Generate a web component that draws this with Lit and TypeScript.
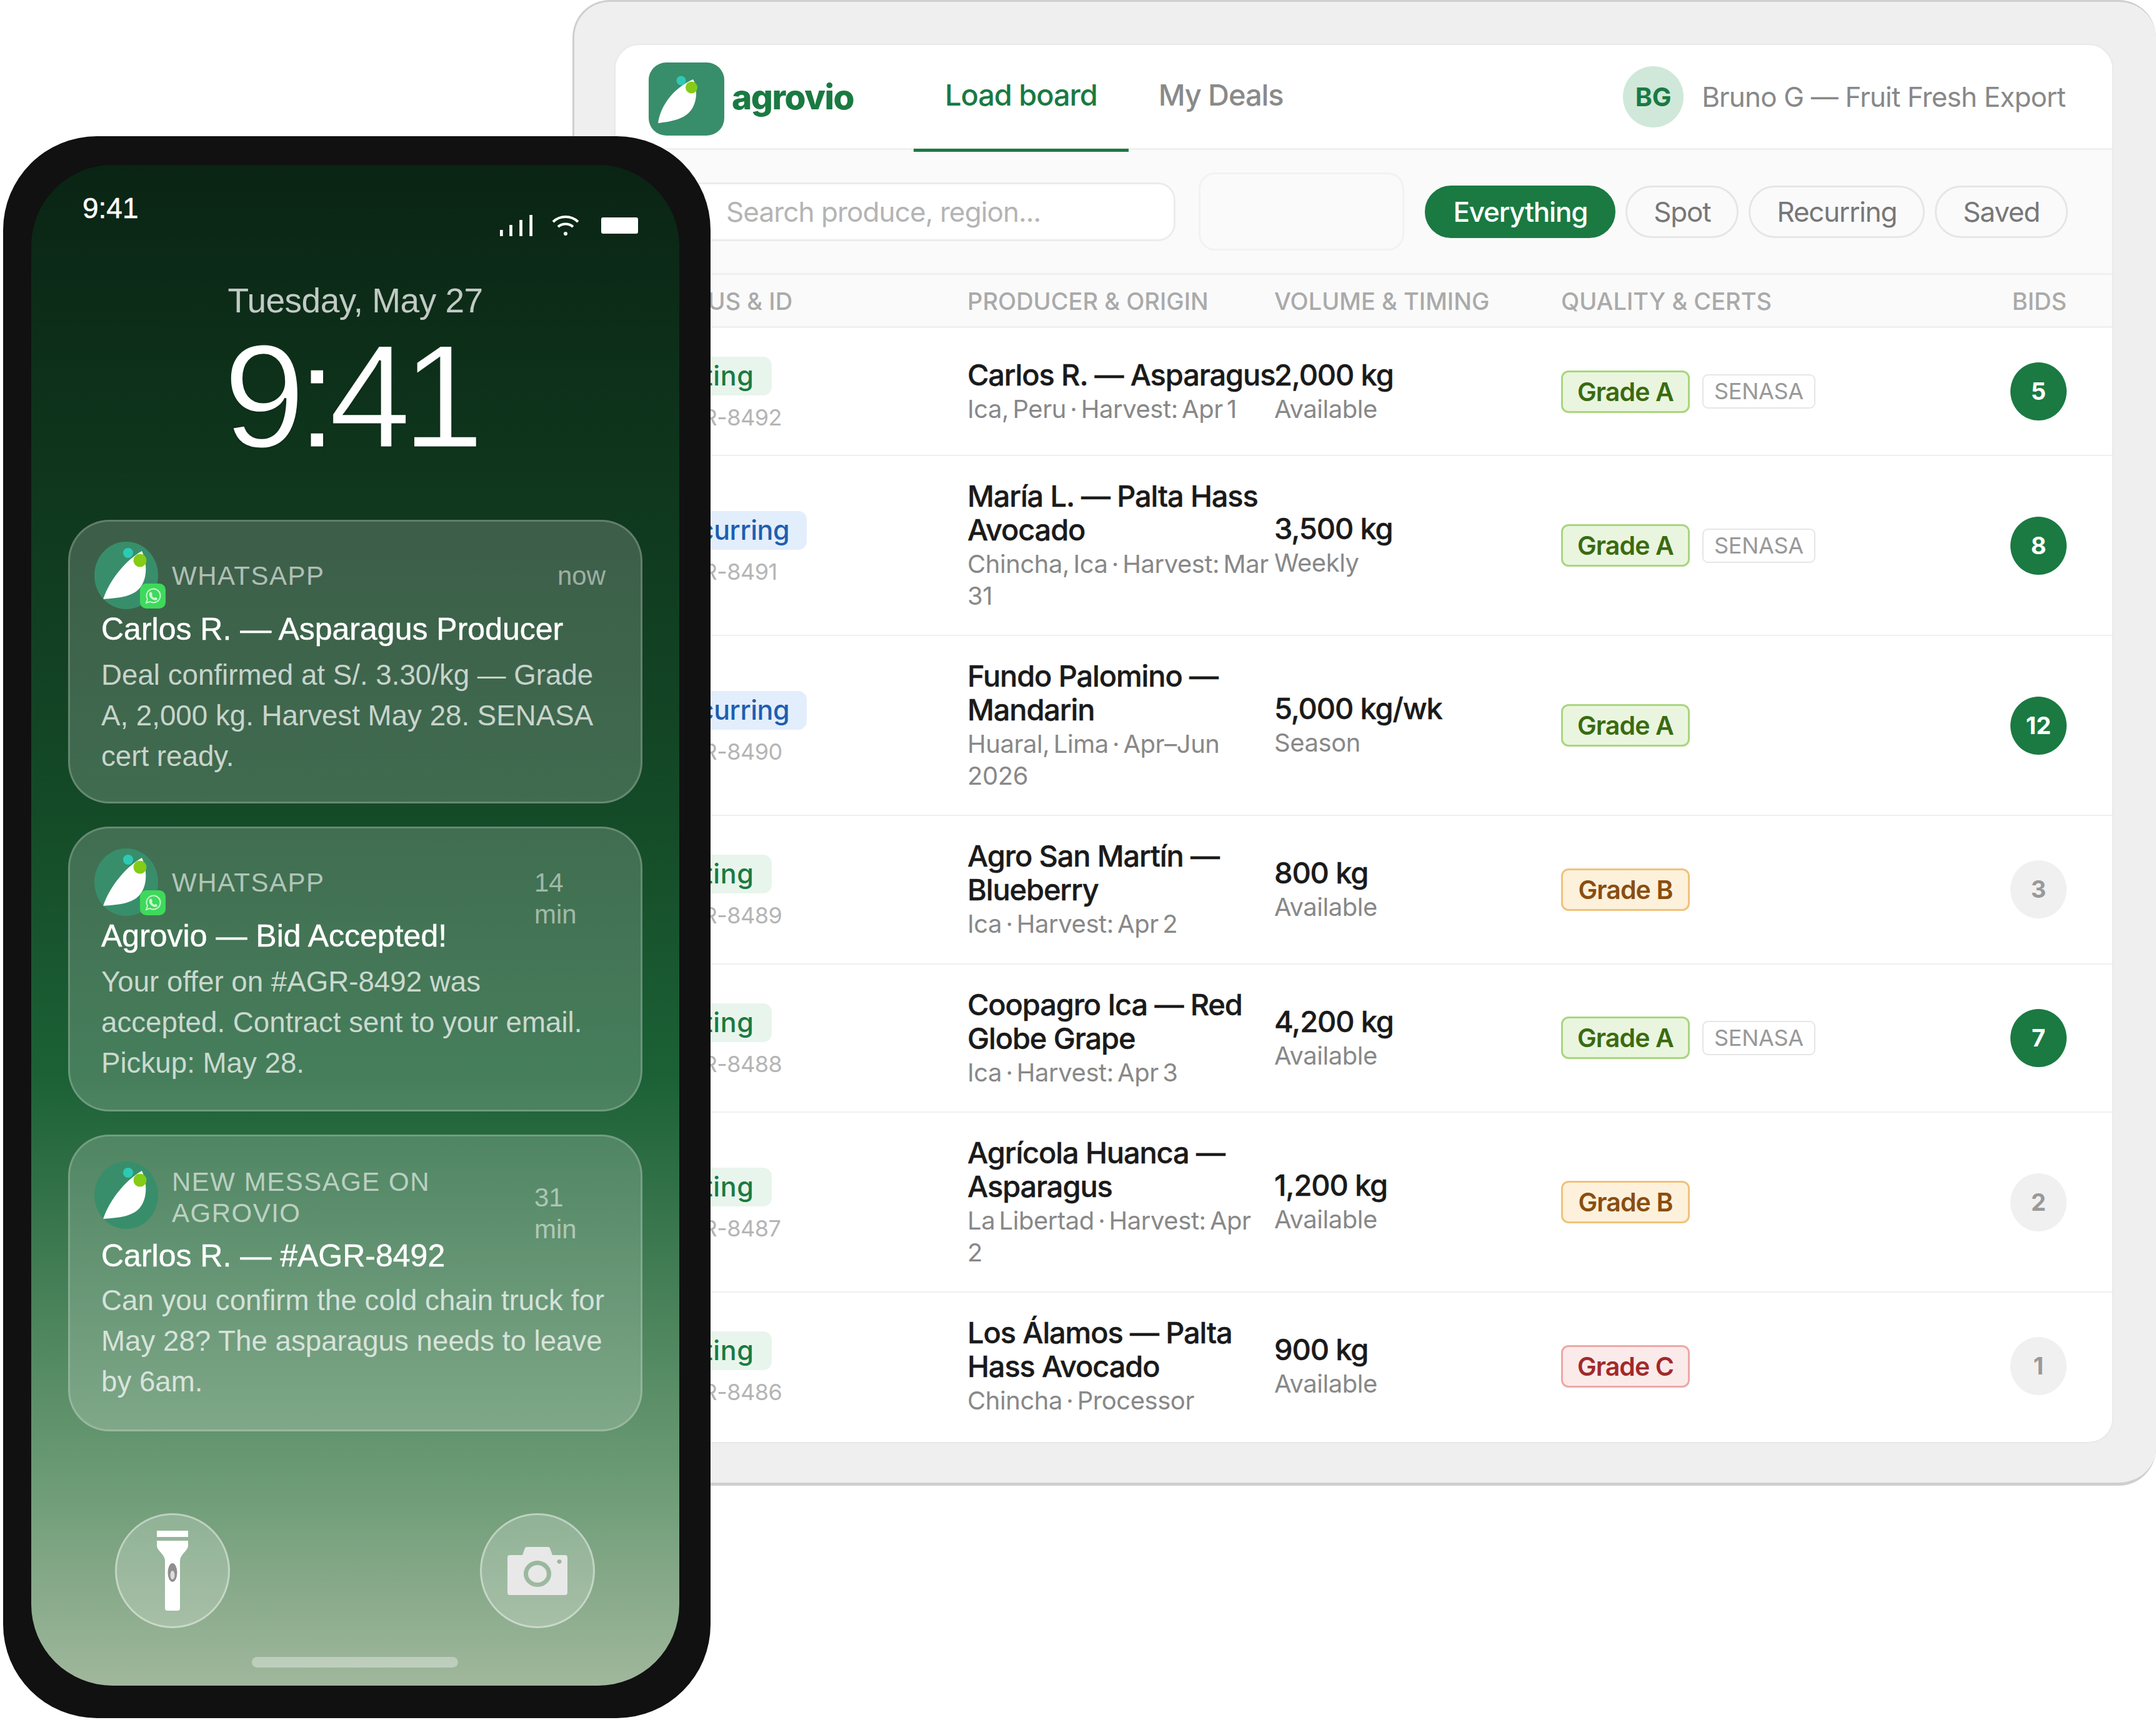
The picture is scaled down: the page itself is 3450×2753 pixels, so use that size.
import { LitElement, html, css, svg } from "lit";
import { customElement } from "lit/decorators.js";

interface Row { st: string; kind: string; id: string; title: string; sub: string; vol: string; time: string; grade: string; cert: boolean; bids: number; on: boolean; }
const rows: Row[] = [
  { st: "Listing", kind: "list", id: "AGR-8492", title: "Carlos R. — Asparagus", sub: "Ica, Peru · Harvest: Apr 1", vol: "2,000 kg", time: "Available", grade: "A", cert: true, bids: 5, on: true },
  { st: "Recurring", kind: "rec", id: "AGR-8491", title: "María L. — Palta Hass Avocado", sub: "Chincha, Ica · Harvest: Mar 31", vol: "3,500 kg", time: "Weekly", grade: "A", cert: true, bids: 8, on: true },
  { st: "Recurring", kind: "rec", id: "AGR-8490", title: "Fundo Palomino — Mandarin", sub: "Huaral, Lima · Apr–Jun 2026", vol: "5,000 kg/wk", time: "Season", grade: "A", cert: false, bids: 12, on: true },
  { st: "Listing", kind: "list", id: "AGR-8489", title: "Agro San Martín — Blueberry", sub: "Ica · Harvest: Apr 2", vol: "800 kg", time: "Available", grade: "B", cert: false, bids: 3, on: false },
  { st: "Listing", kind: "list", id: "AGR-8488", title: "Coopagro Ica — Red Globe Grape", sub: "Ica · Harvest: Apr 3", vol: "4,200 kg", time: "Available", grade: "A", cert: true, bids: 7, on: true },
  { st: "Listing", kind: "list", id: "AGR-8487", title: "Agrícola Huanca — Asparagus", sub: "La Libertad · Harvest: Apr\n2", vol: "1,200 kg", time: "Available", grade: "B", cert: false, bids: 2, on: false },
  { st: "Listing", kind: "list", id: "AGR-8486", title: "Los Álamos — Palta Hass Avocado", sub: "Chincha · Processor", vol: "900 kg", time: "Available", grade: "C", cert: false, bids: 1, on: false },
];

const notifs = [
  { cls: "n1", app: "WHATSAPP", time: "now", wa: true, title: "Carlos R. — Asparagus Producer", body: "Deal confirmed at S/. 3.30/kg — Grade A, 2,000 kg. Harvest May 28. SENASA cert ready." },
  { cls: "n2", app: "WHATSAPP", time: "14 min", wa: true, title: "Agrovio — Bid Accepted!", body: "Your offer on #AGR-8492 was accepted. Contract sent to your email. Pickup: May 28." },
  { cls: "n3", app: "NEW MESSAGE ON AGROVIO", time: "31 min", wa: false, title: "Carlos R. — #AGR-8492", body: "Can you confirm the cold chain truck for May 28? The asparagus needs to leave by 6am." },
];

const logoSvg = svg`<path d="M15 97C19 70 38 42 71 27C78 38 78 60 70 73C60 90 40 94 15 97Z" fill="#fff"/><circle cx="52" cy="29" r="7.5" fill="#2ec9b5"/><circle cx="68.500" cy="40" r="9.500" fill="#84cc16"/>`;
const notifSvg = svg`<path d="M14 92C25 60 50 30 76 15C85 35 85 60 72 75C60 88 40 90 14 92Z" fill="#fff"/><circle cx="54" cy="18" r="8" fill="#2ec9b5"/><circle cx="73" cy="30" r="10.500" fill="#84cc16"/>`;

@customElement("app-root")
export class AppRoot extends LitElement {
  static styles = css`
    :host { display: block; height: 2753px; background: #fff; position: relative; overflow: hidden; font-family: Inter, "Liberation Sans", sans-serif; color: #1a1a1a; }
    * { box-sizing: border-box; }
    .frame { margin-left: 916px; width: 2534px; height: 2378px; padding: 67px 68px 0 64px; background: #efefef; border: solid #cfcfcf; border-width: 3px 0 5px 3px; border-radius: 60px; }
    .panel { width: 2399px; height: 2240px; background: #fff; border-radius: 40px; border: 2px solid #e9e9e9; overflow: hidden; }
    .top { display: flex; align-items: stretch; height: 168px; padding: 28px 75px 0 53px; border-bottom: 3px solid #f0f0f0; }
    .logo { width: 121px; height: 117px; flex: none; display: block; }
    .brand { font-size: 55px; font-weight: 800; letter-spacing: -1.500px; color: #1a7a42; margin: 20px 0 0 12px; line-height: 70px; height: 70px; width: 199px; flex: none; }
    .tabs { display: flex; margin-left: 92px; margin-top: -28px; }
    .tab { height: 171px; padding: 0 50px; font-size: 47px; font-weight: 500; letter-spacing: -1.100px; line-height: 160px; color: #8a8a8a; white-space: nowrap; }
    .tab + .tab { padding-left: 48px; }
    .tab.on { color: #1a7a42; border-bottom: 5px solid #1a7a42; }
    .user { margin-left: auto; display: flex; align-items: flex-start; gap: 29px; font-size: 44px; color: #888; line-height: 98px; margin-top: 6px; white-space: nowrap; letter-spacing: -.85px; }
    .ava { width: 97px; height: 98px; border-radius: 50%; background: #cfe8da; color: #1a7a42; font-size: 41px; font-weight: 700; text-align: center; flex: none; letter-spacing: 0; }
    .tools { display: flex; align-items: center; height: 200px; padding: 0 71px 0 53px; background: #fafafa; border-bottom: 3px solid #f0f0f0; }
    .search { width: 843px; height: 94px; background: #fff; border: 3px solid #ececec; border-radius: 28px; display: flex; align-items: center; padding-left: 64px; gap: 25px; font-size: 44px; color: #b4b4b4; letter-spacing: -.9px; flex: none; }
    .search svg { flex: none; width: 32px; height: 32px; }
    .blank { width: 329px; height: 125px; margin-left: 37px; border: 3px solid #f2f2f2; border-radius: 26px; background: #fafafa; flex: none; }
    .pills { display: flex; margin-left: auto; gap: 16px; align-items: center; }
    .pill { height: 84px; line-height: 78px; padding: 0 42px; border: 3px solid #e6e6e6; border-radius: 42px; font-size: 44px; color: #777; background: #fafafa; letter-spacing: -1.200px; white-space: nowrap; }
    .pill.on { background: #1a7a42; border-color: #1a7a42; color: #fff; font-weight: 500; }
    .grid { display: grid; grid-template-columns: 510px 491px 459px 1fr auto; padding: 0 73px 0 53px; align-items: center; }
    .head { height: 85px; background: #fafafa; border-bottom: 3px solid #f0f0f0; font-size: 38px; font-weight: 500; color: #aaa; line-height: 84px; white-space: nowrap; }
    .row { padding-top: 37px; padding-bottom: 37px; border-bottom: 2px solid #f0f0f0; }
    .row:last-child { border-bottom: 0; }
    .stat { display: flex; flex-direction: column; align-items: flex-start; gap: 10px; margin-top: 9px; margin-bottom: -2px; }
    .badge { height: 62px; line-height: 60px; padding: 0 28px; border-radius: 14px; font-size: 43px; font-weight: 500; letter-spacing: -.4px; }
    .badge.list { background: #e8f5ec; color: #1a7a42; letter-spacing: .6px; }
    .badge.rec { background: #e3eefc; color: #1d5fb0; }
    .id { padding-left: 37px; font-size: 36px; line-height: 50px; color: #b5b5b5; letter-spacing: -.5px; }
    .t { font-size: 47px; line-height: 54px; font-weight: 500; letter-spacing: -1.150px; color: #1a1a1a; white-space: normal; -webkit-text-stroke: .4px #1a1a1a; }
    .nowrap { white-space: nowrap; }
    .s { margin-top: 3px; font-size: 40px; line-height: 50.500px; color: #888; letter-spacing: -.45px; word-spacing: -4.500px; white-space: pre-line; }
    .certs { display: flex; align-items: center; gap: 20px; }
    .grade { width: 206px; height: 68px; line-height: 62px; text-align: center; border-radius: 12px; border: 3px solid; font-size: 41px; font-weight: 600; letter-spacing: -.9px; }
    .g-A { background: #eaf5df; border-color: #a9d67e; color: #3a6b10; }
    .g-B { background: #fdf1dc; border-color: #f0c27a; color: #8a4e10; }
    .g-C { background: #fbeaea; border-color: #eca9a5; color: #a12a2a; }
    .cert { height: 55px; line-height: 50px; padding: 0 17px; border: 2.500px solid #e6e6e6; border-radius: 9px; background: #fff; font-size: 36px; color: #999; letter-spacing: -.3px; }
    .bids { width: 90px; height: 93px; border-radius: 50%; line-height: 93px; text-align: center; font-size: 38px; font-weight: 700; background: #f0f0f0; color: #999; }
    .bids.on { background: #1a7a42; color: #fff; }

    .phone { position: absolute; left: 5px; top: 218px; width: 1132px; height: 2532px; background: #111; border-radius: 150px; padding: 46px 50px 52px 45px; }
    .screen { height: 100%; border-radius: 130px; position: relative; overflow: hidden; padding: 0 59px; font-family: "Liberation Sans", Arial, sans-serif; color: #fff; background: linear-gradient(180deg, #0a2414 0%, #144a27 42%, #1c6136 60%, #6a9a74 86%, #a0b79c 100%); }
    .bar { display: flex; justify-content: space-between; height: 187px; }
    .clock { font-size: 46px; line-height: 46px; margin: 46px 0 0 23px; font-weight: 400; -webkit-text-stroke: .5px #fff; }
    .sys { display: flex; gap: 31px; margin: 80px 7px 0 0; align-items: center; height: 34px; }
    .sys .batt { margin-left: 4px; }
    .date { text-align: center; font-size: 55px; line-height: 60px; color: rgba(255,255,255,.75); letter-spacing: -.5px; }
    .big { text-align: center; font-size: 236px; line-height: 200px; height: 200px; margin-top: 23px; letter-spacing: -14px; padding-right: 19px; -webkit-text-stroke: 3px #0e3019; }
    .cards { margin-top: 98px; display: flex; flex-direction: column; gap: 37px; }
    .card { border: 3px solid rgba(255,255,255,.2); background: rgba(255,255,255,.19); border-radius: 66px; padding: 32px 52px 0 50px; margin: 0; }
    .n1 { height: 454px; } .n2 { height: 456px; } .n3 { height: 475px; }
    .chead { display: flex; align-items: flex-start; height: 108px; }
    .n3 .chead { height: 125px; }
    .n3 .ic { margin-top: 8px; }
    .ic { position: relative; flex: none; width: 102px; height: 108px; margin-left: -11px; }
    .ic > svg.lg { display: block; width: 102px; height: 108px; background: #388e6b; border-radius: 50%; }
    .ic > svg.wa { position: absolute; left: 73px; top: 67px; width: 41px; height: 40px; background: #3ed95b; border-radius: 10px; display: block; }
    .app { margin-left: 22px; margin-top: 30px; font-size: 42px; line-height: 50px; letter-spacing: 1.500px; color: rgba(255,255,255,.62); width: 480px; flex: none; }
    .n3 .app { margin-top: 16px; }
    .tm { margin-left: auto; margin-right: 4px; font-size: 42px; line-height: 51px; color: rgba(255,255,255,.5); margin-top: 29px; flex: none; }
    .tm.w { width: 114px; }
    .n3 .tm { margin-top: 40px; }
    .ct { margin-top: 1px; font-size: 50px; line-height: 62px; -webkit-text-stroke: .5px #fff; white-space: nowrap; }
    .n3 .ct { margin-top: 3px; }
    .cb { margin-top: 10px; font-size: 45.700px; line-height: 65px; color: rgba(255,255,255,.72); }
    .n3 .cb { margin-top: 8px; }
    .round { position: absolute; top: 2158px; width: 184px; height: 184px; border-radius: 50%; border: 3px solid rgba(255,255,255,.4); background: rgba(255,255,255,.2); display: flex; align-items: center; justify-content: center; }
    .round.l { left: 134px; } .round.r { left: 718px; }
    .home { position: absolute; left: 353px; top: 2388px; width: 330px; height: 17px; border-radius: 9px; background: rgba(255,255,255,.35); }
  `;

  private icon(wa: boolean) {
    return html`<div class="ic"><svg class="lg" viewBox="0 0 102 108">${notifSvg}</svg>${wa ? html`<svg class="wa" viewBox="0 0 41 40"><path d="M10 31l2-6a11 11 0 1 1 4 4z" fill="none" stroke="#c9f5d2" stroke-width="2"/><path d="M16 14c1-1 2-1 3 1l1 2-1 2c1 2 2 3 4 4l2-1 2 1c1 1 1 2 0 3-3 2-7 0-10-3s-3-7-1-9z" fill="#c9f5d2"/></svg>` : ""}</div>`;
  }

  render() {
    return html`
      <div class="frame"><div class="panel">
        <div class="top">
          <svg class="logo" viewBox="0 0 121 117"><rect width="121" height="117" rx="28" fill="#388e6b"/>${logoSvg}</svg>
          <div class="brand">agrovio</div>
          <div class="tabs"><div class="tab on">Load board</div><div class="tab">My Deals</div></div>
          <div class="user"><div class="ava">BG</div>Bruno G — Fruit Fresh Export</div>
        </div>
        <div class="tools">
          <div class="search"><svg viewBox="0 0 32 32" fill="none" stroke="#bbb" stroke-width="3"><circle cx="14" cy="14" r="10"/><path d="M22 22l8 8"/></svg>Search produce, region...</div>
          <div class="blank"></div>
          <div class="pills"><div class="pill on">Everything</div><div class="pill">Spot</div><div class="pill">Recurring</div><div class="pill">Saved</div></div>
        </div>
        <div class="grid head"><div>STATUS &amp; ID</div><div>PRODUCER &amp; ORIGIN</div><div>VOLUME &amp; TIMING</div><div>QUALITY &amp; CERTS</div><div>BIDS</div></div>
        ${rows.map(r => html`<div class="grid row">
          <div class="stat"><div class="badge ${r.kind}">${r.st}</div><div class="id">${r.id}</div></div>
          <div><div class="t ${r.id === "AGR-8492" ? "nowrap" : ""}">${r.title}</div><div class="s">${r.sub}</div></div>
          <div><div class="t">${r.vol}</div><div class="s">${r.time}</div></div>
          <div class="certs"><div class="grade g-${r.grade}">Grade ${r.grade}</div>${r.cert ? html`<div class="cert">SENASA</div>` : ""}</div>
          <div class="bids ${r.on ? "on" : ""}">${r.bids}</div>
        </div>`)}
      </div></div>

      <div class="phone"><div class="screen">
        <div class="bar">
          <div class="clock">9:41</div>
          <div class="sys">
            <svg width="52" height="34" viewBox="0 0 55 34" preserveAspectRatio="none" fill="#fff"><rect x="0" y="24" width="5" height="10"/><rect x="16" y="16" width="5" height="18"/><rect x="33" y="8" width="5" height="26"/><rect x="50" y="0" width="5" height="34"/></svg>
            <svg width="44" height="36" viewBox="0 0 44 36" fill="none" stroke="#fff" stroke-width="4"><path d="M2 12a29 29 0 0 1 40 0"/><path d="M10 20a18 18 0 0 1 24 0"/><circle cx="22" cy="31" r="3" fill="#fff" stroke="none"/></svg>
            <svg class="batt" width="59" height="26" viewBox="0 0 59 26"><rect width="59" height="26" rx="3" fill="#fff"/></svg>
          </div>
        </div>
        <div class="date">Tuesday, May 27</div>
        <div class="big">9:41</div>
        <div class="cards">
          ${notifs.map(n => html`<div class="card ${n.cls}">
            <div class="chead">${this.icon(n.wa)}<div class="app">${n.app}</div><div class="tm ${n.time === "now" ? "" : "w"}">${n.time}</div></div>
            <div class="ct">${n.title}</div>
            <div class="cb">${n.body}</div>
          </div>`)}
        </div>
        <div class="round l"><svg width="50" height="128" viewBox="0 0 50 128"><rect width="50" height="10" fill="#fff"/><path d="M0 16h50v8c0 8-13 14-13 24v76q0 4-4 4H17q-4 0-4-4V48C13 38 0 32 0 24z" fill="#fff"/><ellipse cx="25" cy="67" rx="7.500" ry="15" fill="#8f8f8f"/><ellipse cx="25" cy="71" rx="3.500" ry="7" fill="#ddd"/></svg></div>
        <div class="round r"><svg width="96" height="77" viewBox="0 0 96 77"><path fill-rule="evenodd" fill="#e8e8e8" d="M4 13H24L28 2q1-2 3-2H65q2 0 3 2L72 13H92q4 0 4 4V73q0 4-4 4H4q-4 0-4-4V17q0-4 4-4zM48 22a22 21 0 1 0 .1 0zM48 29a15 14 0 1 1-.1 0zM83 20a3.500 3.500 0 1 0 .1 0z"/></svg></div>
        <div class="home"></div>
      </div></div>
    `;
  }
}
